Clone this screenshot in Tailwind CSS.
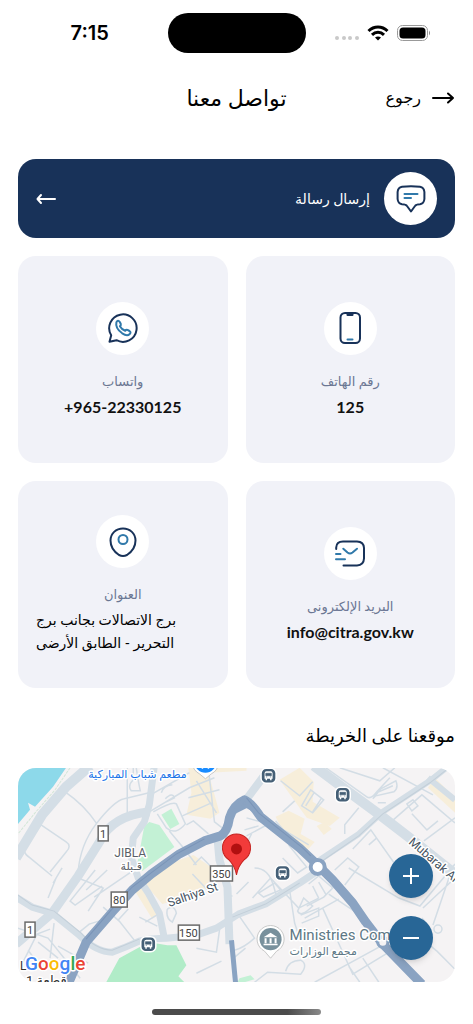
<!DOCTYPE html>
<html lang="ar" dir="rtl">
  <head>
    <meta charset="UTF-8" />
    <meta name="viewport" content="width=device-width, initial-scale=1.0" />
    <title>تواصل معنا</title>
    <script src="https://cdn.jsdelivr.net/npm/@tailwindcss/browser@4"></script>
  </head>
  <body
    class="bg-white text-[#111] min-h-screen font-['Lato','DejaVu_Sans',sans-serif]"
  >
    <!-- status bar -->
    <div dir="ltr" class="grid grid-cols-[1fr_auto_1fr] items-center px-3 pt-[13px]">
      <p class="text-center text-xl font-semibold text-black font-['Inter',sans-serif]">7:15</p>
      <div class="w-[138px] h-10 rounded-full bg-black"></div>
      <div class="flex items-center justify-center gap-2">
        <svg class="w-6 h-4" viewBox="0 0 24 16" fill="#c9c9c9">
          <circle cx="2" cy="13" r="2" />
          <circle cx="9" cy="13" r="2" />
          <circle cx="15" cy="13" r="2" />
          <circle cx="22" cy="13" r="2" />
        </svg>
        <svg class="w-[22px] h-4" viewBox="0 0 22 16" fill="none" stroke="#000" stroke-width="3">
          <path d="M1.500 6C7 .6 15 .6 20.500 6" />
          <path d="M5 9.800C8.500 6.400 13.500 6.400 17 9.800" />
          <path d="M8 12.600C9.800 11 12.200 11 14 12.600L11 15.600Z" fill="#000" stroke="none" />
        </svg>
        <svg class="w-[34px] h-4" viewBox="0 0 34 16">
          <rect x=".5" y=".5" width="30" height="15" rx="5" fill="none" stroke="#999" />
          <rect x="2.500" y="2.500" width="26" height="11" rx="3.500" />
          <path d="M32 5.500Q34 8 32 10.500Z" fill="#888" />
        </svg>
      </div>
    </div>

    <!-- header -->
    <header class="grid grid-cols-[1fr_auto_1fr] items-center h-[88px] px-[18px]">
      <a href="#" class="flex items-center gap-[10px] text-base text-black">
        <svg class="w-6 h-4" viewBox="0 0 24 16" fill="none" stroke="#000" stroke-width="2" stroke-linecap="round" stroke-linejoin="round">
          <path d="M2 9H22M17 4.500L22 9L17 13.500" />
        </svg>
        رجوع
      </a>
      <h1 class="text-[22px] font-medium text-black">تواصل معنا</h1>
    </header>

    <main class="px-[18px] pt-[18px]">
      <!-- send message -->
      <a href="#" class="flex items-center gap-[14px] h-[79px] px-[18px] rounded-[18px] bg-[#183259] text-white">
        <span class="flex items-center justify-center w-[53px] h-[53px] rounded-full bg-white">
          <svg class="w-8 h-8" viewBox="0 0 32 32" fill="none" stroke="#183259" stroke-width="2" stroke-linecap="round" stroke-linejoin="round">
            <path d="M7 3.800Q16 2.600 25 3.800Q29 4.500 29.400 9V16Q29 20.500 25 21.200Q21 21.300 20 23L16 28.500L12 23Q11 21.300 7 21.200Q3 20.500 2.600 16V9Q3 4.500 7 3.800Z" />
            <path d="M9.500 11H22.500M9.500 15H16" stroke="#3079aa" />
          </svg>
        </span>
        <span class="text-sm font-medium">إرسال رسالة</span>
        <svg class="w-5 h-4 ms-auto" viewBox="0 0 20 16" fill="none" stroke="#fff" stroke-width="2" stroke-linecap="round" stroke-linejoin="round">
          <path d="M19 8H2M5 4L1.500 8L5 12" />
        </svg>
      </a>

      <!-- contact cards -->
      <div class="mt-[18px] grid grid-cols-2 gap-[18px]">
        <div class="flex flex-col items-center justify-center min-h-[207px] px-[18px] rounded-[18px] bg-[#f1f2f8]">
          <span class="flex items-center justify-center w-[53px] h-[53px] mb-[14px] rounded-full bg-white">
            <svg class="w-8 h-8" viewBox="0 0 32 32" fill="none" stroke="#183259" stroke-width="2">
              <rect x="6.500" y="1" width="19.500" height="30" rx="4.500" />
              <path d="M12.500 1.500H19.500V3Q19.500 4 18.500 4H13.500Q12.500 4 12.500 3Z" fill="#183259" stroke="none" />
              <path d="M13.500 27.600H18.500" stroke="#3079aa" stroke-linecap="round" />
            </svg>
          </span>
          <p class="text-[13px] leading-6 text-[#6b7793]">رقم الهاتف</p>
          <a href="tel:125" class="mt-[2px] text-base leading-[23px] font-bold">125</a>
        </div>

        <div class="flex flex-col items-center justify-center min-h-[207px] px-[18px] rounded-[18px] bg-[#f1f2f8]">
          <span class="flex items-center justify-center w-[53px] h-[53px] mb-[14px] rounded-full bg-white">
            <svg class="w-8 h-8" viewBox="0 0 32 32" fill="none" stroke="#183259" stroke-width="2" stroke-linecap="round" stroke-linejoin="round">
              <path d="M2.500 29.800L4.200 23.200A13.700 13.700 0 1 1 9.500 28.200Z" />
              <path d="M9.400 10.200Q11 7.500 12.800 10L13.800 12Q14.200 13 12.900 14.200Q14.800 17.500 18.200 18.800Q19.200 17.400 20.500 17.900L22.500 19Q24.500 20.300 22.500 22.200Q20 24.500 15.200 21.300Q8 16 9.400 10.200Z" stroke="#3079aa" />
            </svg>
          </span>
          <p class="text-[13px] leading-6 text-[#6b7793]">واتساب</p>
          <a href="tel:+96522330125" dir="ltr" class="mt-[2px] text-base leading-[23px] font-bold">+965-22330125</a>
        </div>

        <div class="flex flex-col items-center justify-center min-h-[207px] px-[18px] rounded-[18px] bg-[#f1f2f8]">
          <span class="flex items-center justify-center w-[53px] h-[53px] mb-[14px] rounded-full bg-white">
            <svg class="w-8 h-8" viewBox="0 0 32 32" fill="none" stroke="#183259" stroke-width="2" stroke-linecap="round" stroke-linejoin="round">
              <path d="M2.200 12V10.500Q2.500 4.500 9 4.500H23Q29.800 4.800 30 11V21.500Q29.700 28.200 23 28.400H9.500" />
              <path d="M9.300 11.700L13.500 15.500Q16 17.500 18.500 15.500L23 11.700M2 17H6.500M2 22.300H11" stroke="#3079aa" />
            </svg>
          </span>
          <p class="text-[13px] leading-6 text-[#6b7793]">البريد الإلكترونى</p>
          <a href="mailto:info@citra.gov.kw" class="mt-[2px] text-base leading-[23px] font-bold">info@citra.gov.kw</a>
        </div>

        <div class="flex flex-col items-center justify-center min-h-[207px] px-[18px] rounded-[18px] bg-[#f1f2f8]">
          <span class="flex items-center justify-center w-[53px] h-[53px] mb-[14px] rounded-full bg-white">
            <svg class="w-8 h-8" viewBox="0 0 32 32" fill="none" stroke="#183259" stroke-width="2">
              <path d="M16 2.500C23 2.500 28.500 7.500 28.500 14.500C28.500 20.500 24.500 26 20 29Q16 31 12 29C7.500 26 3.500 20.500 3.500 14.500C3.500 7.500 9 2.500 16 2.500Z" />
              <circle cx="16" cy="13.500" r="4.500" stroke="#3079aa" />
            </svg>
          </span>
          <p class="text-[13px] leading-6 text-[#6b7793]">العنوان</p>
          <p class="mt-[2px] w-full text-left text-sm leading-[23px] font-medium text-black whitespace-nowrap">
            برج الاتصالات بجانب برج<br />التحرير - الطابق الأرضى
          </p>
        </div>
      </div>

      <h2 class="mt-[30px] mb-4 text-lg leading-[34px] font-medium text-black">موقعنا على الخريطة</h2>

      <!-- map -->
      <div dir="ltr" class="relative h-[214px] rounded-[18px] overflow-hidden bg-[#f5f3f4]">
        <svg class="w-full h-full font-['Roboto','DejaVu_Sans',sans-serif]" viewBox="0 0 436 214" preserveAspectRatio="xMidYMid slice">
          <defs>
            <g id="bus">
              <rect x="-7.500" y="-7.500" width="15" height="15" rx="5" fill="#455f76" stroke="#fff" stroke-width="1.500" />
              <path d="M-4 3V-2.500Q-4 -4.500 -2 -4.500H2Q4 -4.500 4 -2.500V3H3V4.500H1.500V3H-1.500V4.500H-3V3Z" fill="#fff" />
              <path d="M-2.800 -2.500H2.800V0H-2.800ZM-2.600 1.200H-1.400M1.400 1.200H2.600" fill="#455f76" stroke="#455f76" stroke-width=".6" />
            </g>
          </defs>

          <!-- water, parks and built-up blocks -->
          <path d="M0 0H48L35 19L17 39L10 35L12 42L0 56Z" fill="#8dd9ea" />
          <path d="M52 0L37 22L17 45L0 66" fill="none" stroke="#d3e6d8" stroke-dasharray="3 1" />
          <path d="M126 58L131 54L141 57L156 79L124 103L119 96Z" fill="#c3f1d5" />
          <path d="M143 47L153 41L161 56L152 61Z" fill="#c3f1d5" />
          <path d="M88 214L101 190L121 179L131 174L149 177L158 177L168 197L160 208L166 214Z" fill="#b1ecc8" />
          <path d="M221 210L232 207L236 211L226 214H219Z" fill="#c3f1d5" />
          <g fill="#f7eeda">
            <path d="M170 0H228V3L190 5L201 45L192 51L168 47L173 25Z" />
            <path d="M261 12L281 0L295 14L294 34L321 50L311 58L288 50L268 22Z" />
            <path d="M257 49L270 43L286 51L282 66L296 74L287 84L270 74Z" />
            <path d="M298 58L306 54L313 61L305 67Z" />
            <path d="M124 113L150 96L175 87L197 102L182 128L162 131L144 136Z" />
            <path d="M116 122L124 116L142 145L134 151Z" />
            <path d="M409 20L416 10L436 30V45Z" />
          </g>

          <!-- small streets -->
          <g fill="none" stroke="#d3dde5" stroke-width="1.500">
            <path d="M47 24Q66 37 78 55M23 57L8 77Q3 84 12 90L34 108M23 57L48 74Q54 78 48 84L32 104M60 104Q62 77 78 56Q96 33 106 31L135 24" />
            <path d="M109 0V45M115 12V0M115 12Q109 18 113 23H122Q120 14 118 0M134 26L171 5M131 44L171 20L196 10M143 25Q145 18 154 17M147 31Q154 24 156 30L148 34M135 44Q154 33 158 36L167 56Q157 68 148 60L139 46M168 57L175 53L190 66M151 63L166 81L178 97M175 97L183 89L197 103" />
            <path d="M190 1L196 54L205 61M178 13L198 45M170 30L201 22M164 48L193 35M228 68L250 56L228 50M233 66L221 90L218 105M236 100Q250 100 255 118L259 132M264 90L279 105L288 99L270 77" />
            <path d="M262 13L281 28L294 14M292 22L305 32L294 45L283 38ZM296 24L287 38M303 30L294 44M264 44L276 33M257 53L265 62L290 77" />
            <path d="M307 0L348 29Q352 32 358 24L371 10M321 0L361 13L376 0M364 0L414 27M354 31L362 21L377 13Q380 20 375 24L357 28ZM360 24L374 18M340 40L326 57V66M359 35H367" />
            <path d="M371 55L403 27L436 55M393 46L408 62L419 53M405 73L436 50M388 36L394 32L399 38L393 43ZM334 81L352 62L376 96M350 77L358 70M316 102L329 90L340 99L326 117M330 100L380 130L401 138L436 96M404 140L436 110M403 150L409 157L402 170L418 183L436 201M414 157L434 98" />
            <circle cx="419" cy="161" r="4" />
            <path d="M234 130L252 110L280 140L300 130M240 125L256 115L262 122L245 129ZM271 122L276 155L281 170M285 130L279 143Q282 150 294 138ZM290 116L300 108L314 120L305 129L288 138M294 118L300 130M300 114L307 126M286 150L320 131M310 126L340 146M282 147L300 140V148L283 155M304 140L334 206L380 178M296 214L362 178M330 198L341 214M344 190L360 214M215 190L227 180M236 214L249 204L282 206Q290 196 282 192Q270 192 267 203" />
            <path d="M77 102L52 133L57 137L84 118M38 110L30 130M60 110L85 120L70 143M68 122L89 102M76 129L113 104M85 139L101 153L116 172M84 152L71 156L60 165M110 141L100 152M127 154L140 146M121 149L139 158M149 141Q156 136 158 145L154 154Q147 150 149 141M174 106L190 123M178 180L198 184L202 155M178 205L203 193M36 155L32 190M44 100L35 115M4 196L19 166L32 161M0 160L30 170L62 210M10 182L26 203M20 174L40 190M40 178L70 195" />
            <path d="M214 128H210M218 144L236 170Q225 180 216 182M218 126L230 114M226 62L240 58" />
          </g>

          <!-- light main roads -->
          <g fill="none" stroke="#d4dee6" stroke-linejoin="round">
            <path d="M72 -2L48 19L24 47L-2 90" stroke-width="10" />
            <path d="M136 -2L131 37L126 54L115 70L113 90L120 110L130 125L141 145L146 170" stroke-width="7" />
            <path d="M131 44Q94 48 82 73L60 108L34 145L-2 176" stroke-width="9" />
            <path d="M-2 129L14 139L34 145L61 167Q78 184 94 184Q108 179 121 173Q132 170 148 170L178 167L198 160L220 146L247 136L281 115L296 105" stroke-width="7" />
            <path d="M199 70L201 92L209 119L211 176" stroke-width="8" />
            <path d="M226 34L244 10L252 -2" stroke-width="8" />
            <path d="M295 -2L327 22L361 47L391 70L436 106" stroke-width="10" />
            <path d="M430 -2L411 13L364 44L340 66L301 92" stroke-width="6" />
            <path d="M409 10L436 32" stroke-width="6" />
          </g>
          <path d="M430 0L411 15L364 46L340 68L302 94M0 127L14 137L36 143L63 165Q78 182 94 182L121 171M214 149L247 136L281 115" fill="none" stroke="#c3cfd9" stroke-width="1" />

          <!-- blue ring road -->
          <g fill="none" stroke="#8aa3c2" stroke-linejoin="round">
            <path d="M50 216L68 174L94 144L114 122L133 106L161 86L186 73L202 68Q209 64 211 50Q215 37 226 32Q233 35 242 49L281 80L299 97L314 112L334 135L347 154L364 176L403 216" stroke-width="9" />
            <path d="M226 30L216 44L228 38L238 44Z" fill="#8aa3c2" stroke-width="4" />
            <path d="M213 172L217 214" stroke-width="5" />
            <circle cx="299" cy="99" r="7" fill="#fff" stroke-width="4" />
            <circle cx="364" cy="174" r="5" fill="#f5f3f4" stroke-width="3" />
          </g>
          <path d="M228 30L240 45L284 80L292 88M68 171L92 143L114 119L158 86L186 71" fill="none" stroke="#7b95b8" />

          <use href="#bus" x="250" y="8" />
          <use href="#bus" x="324" y="27" />
          <use href="#bus" x="264" y="105" />
          <use href="#bus" x="130" y="176" />

          <!-- road numbers -->
          <g fill="#fff" stroke="#6b6b6b" stroke-width="1.500">
            <rect x="80" y="58" width="10" height="15" />
            <rect x="93" y="124" width="16" height="15" />
            <rect x="7" y="154" width="10" height="15" />
            <rect x="160" y="157" width="21" height="15" />
            <rect x="192" y="98" width="22" height="15" />
          </g>
          <g fill="#444" font-size="11" text-anchor="middle">
            <text x="85" y="70">1</text>
            <text x="101" y="136">80</text>
            <text x="12" y="166">1</text>
            <text x="170" y="169">150</text>
            <text x="203" y="110">350</text>
          </g>

          <!-- place names -->
          <g stroke="#fff" stroke-width="3" stroke-linejoin="round" paint-order="stroke">
            <text x="70" y="10" font-size="11" fill="#1a73e8">مطعم شباب المباركية</text>
            <text x="112" y="89" font-size="12" text-anchor="middle" fill="#5a6068">JIBLA</text>
            <text x="113" y="102" font-size="11" text-anchor="middle" fill="#5a6068">قـبلة</text>
            <text transform="translate(151 139) rotate(-19)" font-size="12" fill="#45525e">Salhiya St</text>
            <text transform="translate(389 75) rotate(41)" font-size="12" fill="#45525e">Mubarak Al</text>
            <text x="271" y="172" font-size="15" fill="#5d7885">Ministries Comp</text>
            <text x="271" y="187" font-size="11" fill="#5d7885">مجمع الوزارات</text>
            <text x="2" y="202" font-size="12" fill="#333">L</text>
            <text x="8" y="217" font-size="13" fill="#333">قطعة 1</text>
            <text x="7" y="202" font-size="19" font-weight="500"><tspan fill="#4285f4">G</tspan><tspan fill="#ea4335">o</tspan><tspan fill="#fbbc05">o</tspan><tspan fill="#4285f4">g</tspan><tspan fill="#34a853">l</tspan><tspan fill="#ea4335">e</tspan></text>
          </g>

          <!-- markers -->
          <path d="M174 -4A13 13 0 0 0 181 6L187 11L193 6A13 13 0 0 0 200 -4Z" fill="#fff" stroke="#bbb" stroke-width=".8" />
          <circle cx="187" cy="-6" r="11" fill="#1a8cff" />
          <path d="M184 -2V1M190 -2V1" stroke="#fff" stroke-width="1.500" />
          <path d="M252 190L246 183A13.500 13.500 0 1 1 258 183Z" fill="#fff" stroke="#bbb" stroke-width=".8" />
          <circle cx="252" cy="171" r="11" fill="#78909c" />
          <path d="M245 169L252 164.500L259 169ZM246 170H248V175H246ZM251 170H253V175H251ZM256 170H258V175H256ZM245 175.500H259V177H245Z" fill="#fff" />
          <path d="M218 107Q216.500 98 210 91.500A14 14 0 1 1 226 91.500Q219.500 98 218 107Z" fill="#f23b3a" stroke="#c5221f" />
          <circle cx="218" cy="81" r="5.500" fill="#b11010" />
        </svg>

        <!-- zoom buttons -->
        <div class="absolute right-[22px] bottom-[22px] flex flex-col gap-[18px]">
          <button aria-label="تكبير" class="flex items-center justify-center w-11 h-11 rounded-full bg-[#286696] shadow-md">
            <svg class="w-4 h-4" viewBox="0 0 16 16" stroke="#fff" stroke-width="2"><path d="M0 8H16M8 0V16" /></svg>
          </button>
          <button aria-label="تصغير" class="flex items-center justify-center w-11 h-11 rounded-full bg-[#286696] shadow-md">
            <svg class="w-4 h-4" viewBox="0 0 16 16" stroke="#fff" stroke-width="2"><path d="M0 8H16" /></svg>
          </button>
        </div>
      </div>
    </main>

    <!-- home indicator -->
    <div class="w-[169px] h-[6px] mx-auto mt-[27px] mb-[9px] rounded-full bg-linear-to-r from-[#4b4b4b] from-80% to-[#8a8a8a]"></div>
  </body>
</html>
